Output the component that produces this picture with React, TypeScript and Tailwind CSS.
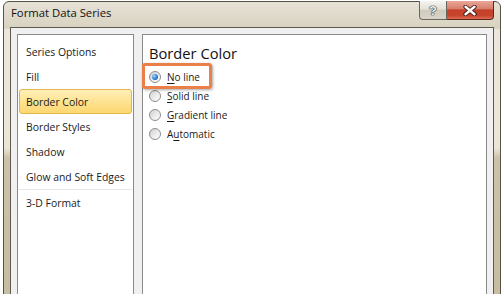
import React from "react";

const items = [
  "Series Options",
  "Fill",
  "Border Color",
  "Border Styles",
  "Shadow",
  "Glow and Soft Edges",
  "3-D Format",
];

function Radio({ checked }: { checked?: boolean }) {
  return (
    <div className="w-[12px] h-[12px] rounded-full border border-[#8d8d8d] bg-[linear-gradient(135deg,#cfcfcf,#ececec_55%,#ffffff)] flex items-center justify-center shrink-0">
      {checked && (
        <div className="w-[6px] h-[6px] rounded-full bg-[radial-gradient(circle_at_35%_35%,#a6d8fa,#2b80d0_55%,#124a8f)]" />
      )}
    </div>
  );
}

function RadioRow({
  checked,
  ul,
  rest,
  pre,
}: {
  checked?: boolean;
  ul: string;
  rest: string;
  pre?: string;
}) {
  return (
    <div className="h-[19px] flex items-center gap-[6px]">
      <Radio checked={checked} />
      <span className="text-[10px] leading-[14px] text-[#1a1a1a]">
        {pre}
        <u className="underline underline-offset-[2px]">{ul}</u>
        {rest}
      </span>
    </div>
  );
}

export default function App() {
  return (
    <div className="w-[502px] h-[294px] overflow-hidden bg-white font-['Open_Sans',sans-serif]">
      <div className="ml-[3px] mt-[1px] w-[498px] h-[310px] rounded-t-[6px] border border-[#55524a] bg-[linear-gradient(to_bottom,#e6e2d6_0px,#d8d2c0_26px,#ece7da_28px,#ebe5d6_146px,#cbc2a7_156px,#c6bca0_100%)] flex flex-col">
        <div className="h-[25px] flex items-start">
          <div className="pl-[7px] pt-[3px] text-[11.3px] leading-[16px] text-[#111]">
            Format Data Series
          </div>
          <div className="ml-auto mr-[6px] -mt-[1px] flex h-[19px]">
            <div className="w-[28px] h-full border border-[#6a675f] border-t-0 rounded-bl-[4px] bg-[linear-gradient(to_bottom,#f5f4f0_0%,#e4e1d8_45%,#cfcbbf_52%,#d8d4c9_100%)] flex items-center justify-center">
              <span className="font-['Liberation_Sans',sans-serif] font-bold text-[13px] leading-[13px] text-[#f2f2f2] [text-shadow:0_0_1px_#222,0_0_1px_#222,0_0_1px_#222]">
                ?
              </span>
            </div>
            <div className="w-[47px] h-full border border-[#5a2a20] border-t-0 border-l-0 rounded-br-[4px] bg-[linear-gradient(to_bottom,#eaa797_0%,#d8806e_42%,#c4402a_50%,#c6442c_80%,#de6a4f_100%)] flex items-center justify-center">
              <svg width="14" height="11" viewBox="0 0 14 11">
                <path d="M2.5 1.8 L11.5 9.2 M11.5 1.8 L2.5 9.2" stroke="#3a1a14" strokeWidth="4.2" strokeLinecap="round" />
                <path d="M2.5 1.8 L11.5 9.2 M11.5 1.8 L2.5 9.2" stroke="#ffffff" strokeWidth="2.4" strokeLinecap="round" />
              </svg>
            </div>
          </div>
        </div>
        <div className="flex-1 mx-[6px] border border-b-0 border-[#5e5a50] bg-[#f0f0f0] flex gap-[8px] pt-[6px] px-[6px]">
          <div className="w-[117px] border border-[#8a8a8a] bg-white pt-[4px] flex flex-col">
            {items.map((it, i) => (
              <React.Fragment key={it}>
                {i === 6 && <div className="mx-[1px] h-[1px] bg-[#e6e6e6]" />}
                <div
                  className={
                    "mx-[1px] h-[25px] flex items-center pl-[6px] border rounded-[3px] text-[10.4px] leading-[14px] text-[#1a1a1a] " +
                    (i === 2
                      ? "border-[#e2b54a] bg-[linear-gradient(to_bottom,#fff0b8_0%,#fee495_45%,#fdd771_100%)]"
                      : "border-transparent")
                  }
                >
                  {it}
                </div>
              </React.Fragment>
            ))}
          </div>
          <div className="flex-1 border border-[#8a8a8a] bg-white pl-[6px] relative flex flex-col">
            <div className="mt-[9px] text-[14.7px] leading-[18px] text-[#111]">
              Border Color
            </div>
            <div className="mt-[5px] flex flex-col">
              <RadioRow checked ul="N" rest="o line" />
              <RadioRow ul="S" rest="olid line" />
              <RadioRow ul="G" rest="radient line" />
              <RadioRow pre="A" ul="u" rest="tomatic" />
            </div>
            <div className="absolute left-[-1px] top-[28px] w-[70px] h-[26px] border-[3px] border-[#e9804a] rounded-[3px] shadow-[1px_1px_3px_rgba(0,0,0,0.35)]" />
          </div>
        </div>
      </div>
    </div>
  );
}
